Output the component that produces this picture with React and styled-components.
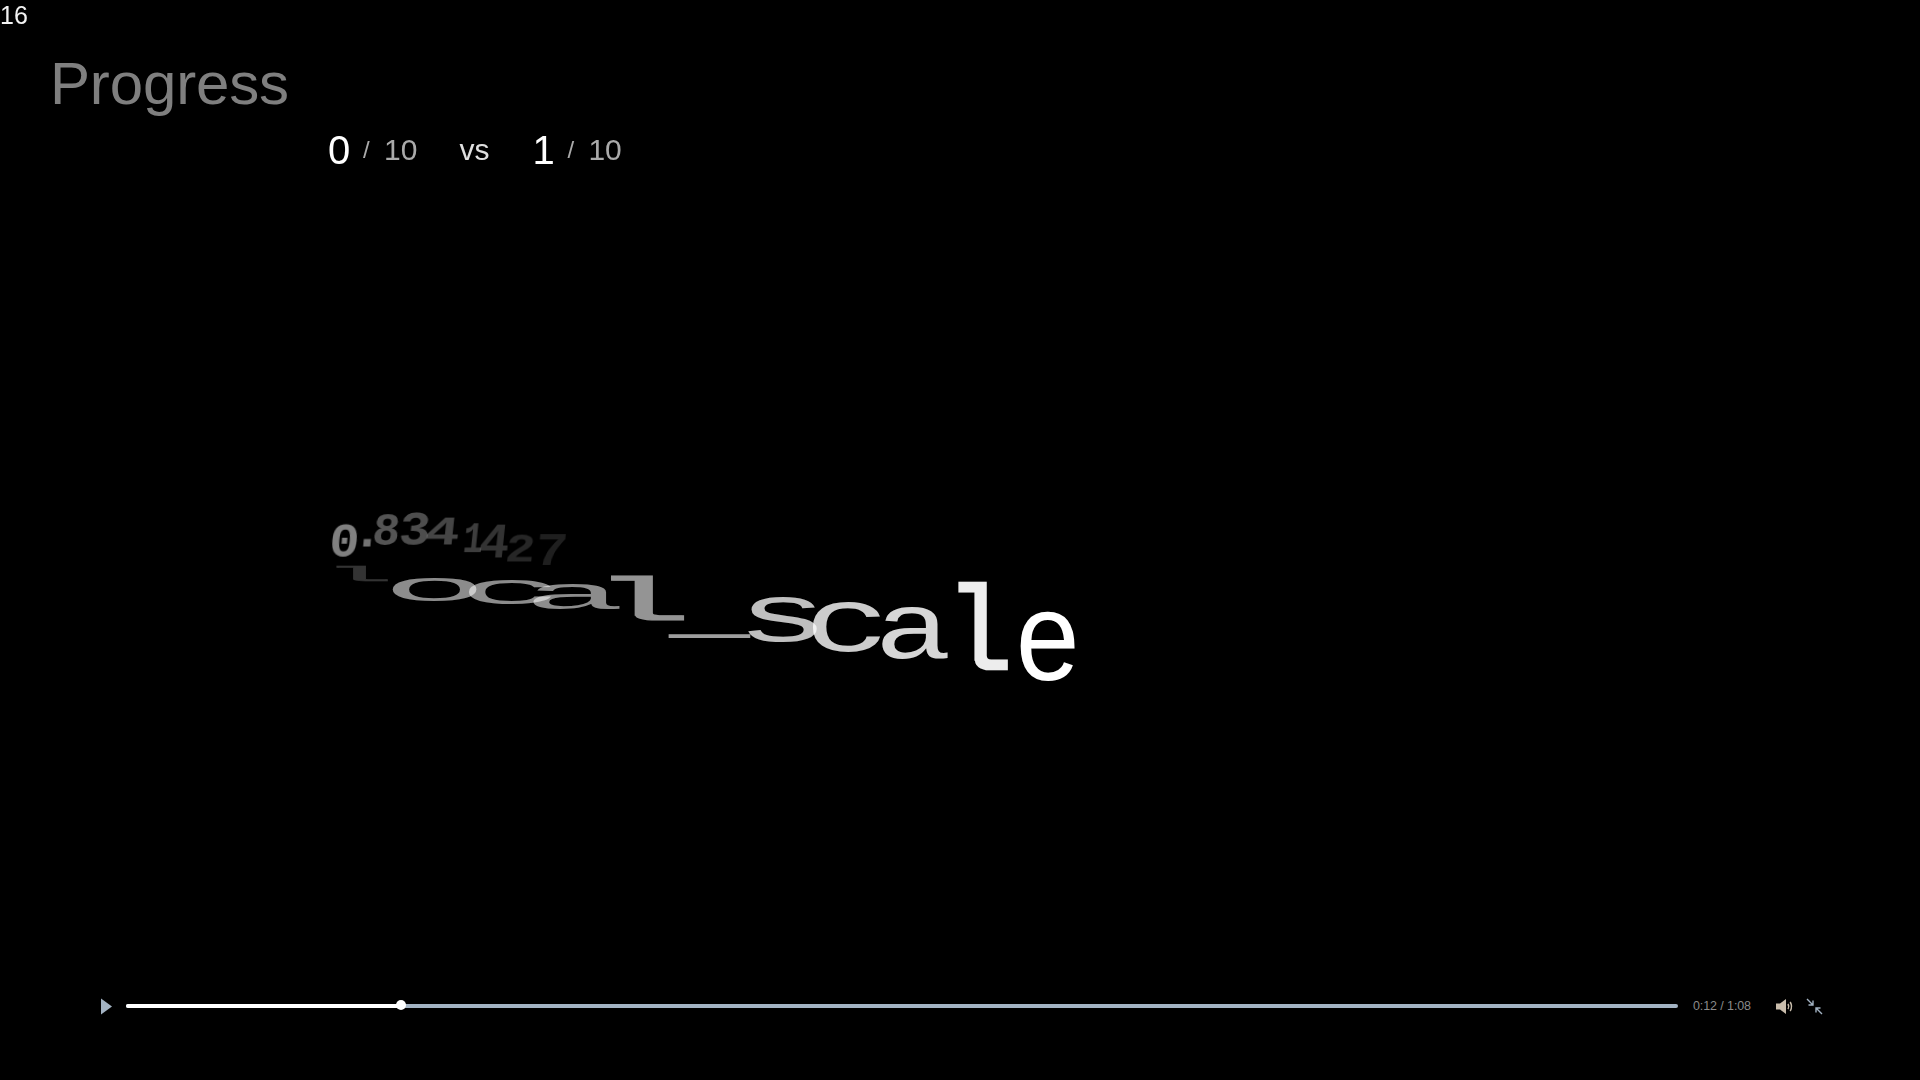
import styled, { createGlobalStyle } from "styled-components";

const GlobalStyle = createGlobalStyle`
    html, body {
        margin: 0;
        background: #000;
    }

    body {
        font-family: "Liberation Sans", Arial, sans-serif;
    }
`;

const Slide = styled.main`
    position: relative;
    display: flex;
    flex-direction: column;
    height: 100vh;
    overflow: hidden;
    background: #000;
`;

const PageNumber = styled.div`
    height: 30px;
    font-size: 25px;
    line-height: 30px;
    color: #f2f2f2;
    filter: blur(0.3px);
`;

const Title = styled.h1`
    margin: 20px 0 0 50px;
    font-size: 60px;
    font-weight: 400;
    line-height: 68px;
    letter-spacing: -0.15px;
    color: #7f7f7f;
    filter: blur(0.3px);
`;

const ScoreRow = styled.div`
    display: flex;
    align-items: center;
    height: 46px;
    margin: 9px 0 0 328px;
    color: #f2f2f2;
    filter: blur(0.3px);
`;

const Score = styled.div`
    display: flex;
    align-items: center;
`;

const Count = styled.span`
    width: 35px;
    font-size: 40px;
    line-height: 46px;
    color: #fff;
`;

const Total = styled.span`
    font-size: 30px;
    color: #aaa;
`;

const Slash = styled(Total)`
    width: 21px;
    font-size: 24px;
`;

const Versus = styled.span`
    margin: 0 43px 0 42px;
    font-size: 30px;
    color: #e0e0e0;
`;

/* the morphing text is a free canvas, each letter sits where the frame put it */
const Canvas = styled.div`
    position: absolute;
    inset: 0;
    filter: blur(0.7px);
`;

const Glyph = styled.span`
    position: absolute;
    left: 0;
    top: 0;
    font-family: "Liberation Mono", monospace;
    font-size: 100px;
    font-weight: ${(props) => (props.$bold ? 700 : 400)};
    line-height: 1;
    white-space: pre;
    color: #fff;
    -webkit-text-stroke: ${(props) => (props.$heavy ? "2px #fff" : "0")};
    filter: ${(props) => (props.$bold ? "blur(0.6px)" : "none")};
    transform-origin: 0 0;
`;

const Controls = styled.div`
    display: flex;
    align-items: center;
    height: 24px;
    margin: auto 0 62px 0;
    padding-left: 100px;
`;

const IconButton = styled.button`
    display: flex;
    align-items: center;
    justify-content: center;
    width: ${(props) => props.$size}px;
    height: 24px;
    margin: 0 0 0 ${(props) => props.$gap || 0}px;
    padding: 0;
    border: 0;
    background: transparent;
`;

const Track = styled.div`
    position: relative;
    width: 1552px;
    height: 4px;
    margin-left: 13px;
    border-radius: 2px;
    background: #a3b3c3;
`;

const Played = styled.div`
    height: 100%;
    border-radius: 2px;
    background: #fff;
`;

const Thumb = styled.div`
    position: absolute;
    top: -4px;
    width: 10px;
    height: 10px;
    margin-left: -5px;
    border-radius: 50%;
    background: #fff;
`;

const Time = styled.span`
    margin: 0 25px 0 15px;
    font-size: 12.5px;
    letter-spacing: -0.1px;
    color: #8a8a8a;
    white-space: nowrap;
`;

const MONO_INK = {
    l: [0.09, 0.53, 0.73, 0],
    o: [0.06, 0.54, 0.54, -0.01],
    c: [0.07, 0.54, 0.54, -0.01],
    a: [0.06, 0.57, 0.54, -0.01],
    _: [0, 0.6, -0.04, -0.09],
    s: [0.08, 0.52, 0.54, -0.01],
    e: [0.06, 0.54, 0.54, -0.01],
    ".": [0.2, 0.4, 0.14, 0],
};
const DIGIT_INK = [0.05, 0.55, 0.66, 0];
const BASELINE = 76.65;

const placeGlyph = ({ ch, box, alpha, skew = 0 }) => {
    const [x0, x1, top, bottom] = MONO_INK[ch] || DIGIT_INK;
    const [left, upper, right, lower] = box;
    const sx = (right - left) / ((x1 - x0) * 100);
    const sy = (lower - upper) / ((top - bottom) * 100);
    const ty = upper - (BASELINE - top * 100) * sy;
    const lean = Math.tan((skew * Math.PI) / 180);
    const tx = left - x0 * 100 * sx - lean * ((upper + lower) / 2 - ty);
    return {
        opacity: alpha,
        transform: `translate(${tx}px, ${ty}px) skewX(${skew}deg) scale(${sx}, ${sy})`,
    };
};

const numberGlyphs = [
    { ch: "0", box: [332, 525, 357, 557], alpha: 0.5, skew: -5 },
    { ch: ".", box: [362, 540, 372, 547], alpha: 0.45, skew: -5 },
    { ch: "8", box: [375, 515, 398, 545], alpha: 0.33, skew: -6 },
    { ch: "3", box: [402, 514, 428, 545], alpha: 0.3, skew: -6 },
    { ch: "4", box: [428, 518, 457, 545], alpha: 0.27, skew: -6 },
    { ch: "1", box: [465, 523, 482, 552], alpha: 0.24, skew: -6 },
    { ch: "4", box: [482, 525, 507, 558], alpha: 0.2, skew: -6 },
    { ch: "2", box: [508, 535, 533, 562], alpha: 0.15, skew: -6 },
    { ch: "7", box: [538, 535, 565, 565], alpha: 0.12, skew: -6 },
];

const wordGlyphs = [
    { ch: "l", box: [333, 566, 385, 581], alpha: 0.2 },
    { ch: "o", box: [392, 579, 477, 602], alpha: 0.55 },
    { ch: "c", box: [470, 581, 553, 605], alpha: 0.55 },
    { ch: "a", box: [533, 585, 620, 610], alpha: 0.55 },
    { ch: "l", box: [606, 575, 680, 620], alpha: 0.58 },
    { ch: "_", box: [669, 633, 750, 637], alpha: 0.62 },
    { ch: "s", box: [748, 597, 817, 642], alpha: 0.75 },
    { ch: "c", box: [814, 602, 882, 652], alpha: 0.8 },
    { ch: "a", box: [882, 608, 948, 660], alpha: 0.84 },
    { ch: "l", box: [955, 583, 1005, 670], alpha: 0.93 },
    { ch: "e", box: [1020, 613, 1075, 682], alpha: 1 },
];

const PlayIcon = () => (
    <svg width="13" height="17" viewBox="0 0 13 17">
        <path d="M1 0.5 L12 8.5 L1 16.5 Z" fill="#a3b3c3" />
    </svg>
);

const VolumeIcon = () => (
    <svg width="18" height="17" viewBox="0 0 18 17">
        <path d="M0 5.5 H4 L10 1 V16 L4 11.5 H0 Z" fill="#c9bdac" />
        <path
            d="M12 6 Q13.5 8.5 12 11 M14.2 4 Q16.8 8.5 14.2 13"
            fill="none"
            stroke="#c9bdac"
            strokeWidth="1.5"
        />
    </svg>
);

const MinimizeIcon = () => (
    <svg width="17" height="17" viewBox="0 0 17 17">
        <path
            d="M1 1 L7 7 M7 2.5 V7 H2.5 M16 16 L10 10 M10 14.5 V10 H14.5"
            fill="none"
            stroke="#a3b3c3"
            strokeWidth="1.4"
        />
    </svg>
);

const App = () => {
    const progress = 275 / 1552;

    return (
        <Slide>
            <GlobalStyle />
            <PageNumber>16</PageNumber>
            <Title>Progress</Title>
            <ScoreRow>
                <Score>
                    <Count>0</Count>
                    <Slash>/</Slash>
                    <Total>10</Total>
                </Score>
                <Versus>vs</Versus>
                <Score>
                    <Count>1</Count>
                    <Slash>/</Slash>
                    <Total>10</Total>
                </Score>
            </ScoreRow>

            <Canvas>
                {numberGlyphs.map((glyph, index) => (
                    <Glyph key={index} $bold style={placeGlyph(glyph)}>
                        {glyph.ch}
                    </Glyph>
                ))}
                {wordGlyphs.map((glyph, index) => (
                    <Glyph key={index} $heavy={glyph.ch === "l"} style={placeGlyph(glyph)}>
                        {glyph.ch}
                    </Glyph>
                ))}
            </Canvas>

            <Controls>
                <IconButton $size={13} type="button">
                    <PlayIcon />
                </IconButton>
                <Track>
                    <Played style={{ width: `${progress * 100}%` }} />
                    <Thumb style={{ left: `${progress * 100}%` }} />
                </Track>
                <Time>0:12 / 1:08</Time>
                <IconButton $size={18} type="button">
                    <VolumeIcon />
                </IconButton>
                <IconButton $size={17} $gap={12} type="button">
                    <MinimizeIcon />
                </IconButton>
            </Controls>
        </Slide>
    );
};

export default App;
